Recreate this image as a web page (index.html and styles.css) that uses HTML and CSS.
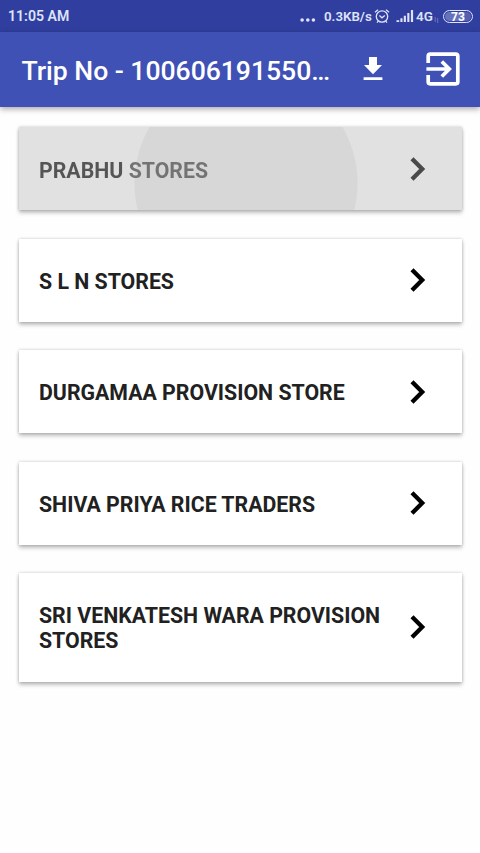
FILE: index.html
```html
<!DOCTYPE html>
<html lang="en">
<head>
<meta charset="utf-8">
<title>Trip stores</title>
<link rel="stylesheet" href="styles.css">
</head>
<body>
<div class="status">
  <span class="clock">11:05 AM</span>
  <svg class="dots" width="16" height="6" viewBox="0 0 16 6"><circle cx="2.1" cy="3" r="1.8"/><circle cx="7.8" cy="3" r="1.8"/><circle cx="13.4" cy="3" r="1.8"/></svg>
  <span class="speed">0.3KB/s</span>
  <svg class="alarm" width="16" height="16" viewBox="0 0 16 16"><circle cx="8" cy="8.5" r="5.7"/><path d="M1 4.2 4 1.7M15 4.2 12 1.7M5.4 7.6 8 9.800l2.800-2.300M4.200 13.200 3 14.600M11.800 13.200l1.200 1.400"/></svg>
  <svg class="signal" width="18" height="14" viewBox="0 0 18 14"><path d="M.5 11.200h2.700V13H.5zM4.400 9.300h2.100V13H4.400zM7.800 6.700h2.100V13H7.800zM11.300 4h2.100v9h-2.100zM14.900 1h2.200v12h-2.200z"/></svg>
  <span class="network">4G</span>
  <svg class="data" width="5" height="6" viewBox="0 0 5 6"><path d="M1.200 0v5M3.700 1v5"/></svg>
  <span class="battery"><span class="level">73</span></span>
</div>
<header class="bar">
  <h1 class="title">Trip No - 100606191550…</h1>
  <svg class="download" width="20" height="24" viewBox="0 0 20 24"><path d="M6 0h8v8h5L10 17.300 1 8h5zM.6 20.300h18.800v2.700H.6z"/></svg>
  <svg class="exit" width="34" height="34" viewBox="0 0 34 34"><path d="M2.200 11V4.200q0-2 2-2h25.600q2 0 2 2v25.600q0 2-2 2H4.200q-2 0-2-2V23M.4 17H23M15.800 9.500 23.300 17l-7.500 7.500"/></svg>
</header>
<main class="list">
  <div class="card pressed"><span class="name">PRABHU STORES</span><svg class="chevron" width="16" height="24" viewBox="0 0 16 24"><path d="m2 1.700 10.200 10.300L2 22.300"/></svg></div>
  <div class="card"><span class="name">S L N STORES</span><svg class="chevron" width="16" height="24" viewBox="0 0 16 24"><path d="m2 1.700 10.200 10.300L2 22.300"/></svg></div>
  <div class="card"><span class="name">DURGAMAA PROVISION STORE</span><svg class="chevron" width="16" height="24" viewBox="0 0 16 24"><path d="m2 1.700 10.200 10.300L2 22.300"/></svg></div>
  <div class="card"><span class="name">SHIVA PRIYA RICE TRADERS</span><svg class="chevron" width="16" height="24" viewBox="0 0 16 24"><path d="m2 1.700 10.200 10.300L2 22.300"/></svg></div>
  <div class="card"><span class="name">SRI VENKATESH WARA PROVISION STORES</span><svg class="chevron" width="16" height="24" viewBox="0 0 16 24"><path d="m2 1.700 10.200 10.300L2 22.300"/></svg></div>
</main>
</body>
</html>
```
FILE: styles.css
```css
* { box-sizing: border-box; }
body {
  margin: 0;
  min-height: 853px;
  background: #fefefe;
  font-family: Roboto, "Liberation Sans", sans-serif;
}
svg { display: block; flex: none; }
.status {
  display: flex;
  align-items: center;
  height: 32px;
  padding: 0 7px 0 8px;
  background: #303f9f;
  color: #dfe3fa;
  font-size: 14px;
  font-weight: 600;
  white-space: nowrap;
}
.clock { margin-right: auto; font-size: 14.1px; }
.dots { fill: #dfe3fa; margin: 7px 8px 0 0; }
.speed { width: 48px; font-size: 13.3px; }
.alarm { margin-left: 2px; fill: none; stroke: #dfe3fa; stroke-width: 1.3; }
.signal { margin-left: 6px; fill: #dfe3fa; }
.network { margin-left: 2px; width: 18px; font-size: 13.5px; }
.data { margin: 7px 4px 0 0; stroke: #6a75bf; stroke-width: 1; }
.battery {
  width: 30px;
  height: 13px;
  padding: 1px;
  border: 1.5px solid #dfe3fa;
  border-radius: 7px;
}
.level {
  display: block;
  height: 9px;
  border-radius: 5px;
  background: linear-gradient(90deg, #6672bc 78%, #5360b2 78%);
  color: #fff;
  font-size: 12px;
  font-weight: 700;
  line-height: 10px;
  text-align: center;
}
.bar {
  display: flex;
  align-items: center;
  height: 75px;
  padding: 0 20.5px 1px 21.5px;
  background: #3f51b5;
  box-shadow: 0 2px 6px rgba(0, 0, 0, .35);
  color: #fff;
}
.title {
  width: 341.5px;
  margin: 2px 0 0;
  font-size: 26.6px;
  font-weight: 500;
  letter-spacing: -.04px;
  white-space: nowrap;
}
.download { fill: #fff; }
.exit { margin-left: auto; fill: none; stroke: #fff; stroke-width: 3.7; }
.list {
  display: flex;
  flex-direction: column;
  gap: 28.5px;
  padding: 20px 18.5px 0;
}
.card {
  display: flex;
  align-items: center;
  justify-content: space-between;
  min-height: 83px;
  padding: 30px 36px 28px 20.5px;
  background: #fff;
  box-shadow: 0 3px 4px rgba(0, 0, 0, .23), 0 0 3px rgba(0, 0, 0, .22);
  color: #212121;
}
.pressed {
  padding-bottom: 27px;
  background: radial-gradient(circle at 227px 56px, #d7d7d7 111px, #e1e1e1 112px);
}
.name {
  width: 346px;
  font-size: 21.3px;
  font-weight: 700;
  line-height: 25.1px;
}
.pressed .name {
  padding-top: 1px;
  background: linear-gradient(90deg, #555 90px, #737373 90px);
  background-clip: text;
  -webkit-background-clip: text;
  color: transparent;
}
.chevron { margin-top: -2px; fill: none; stroke: #000; stroke-width: 4.3; }
.pressed .chevron { stroke: #494949; }
```
